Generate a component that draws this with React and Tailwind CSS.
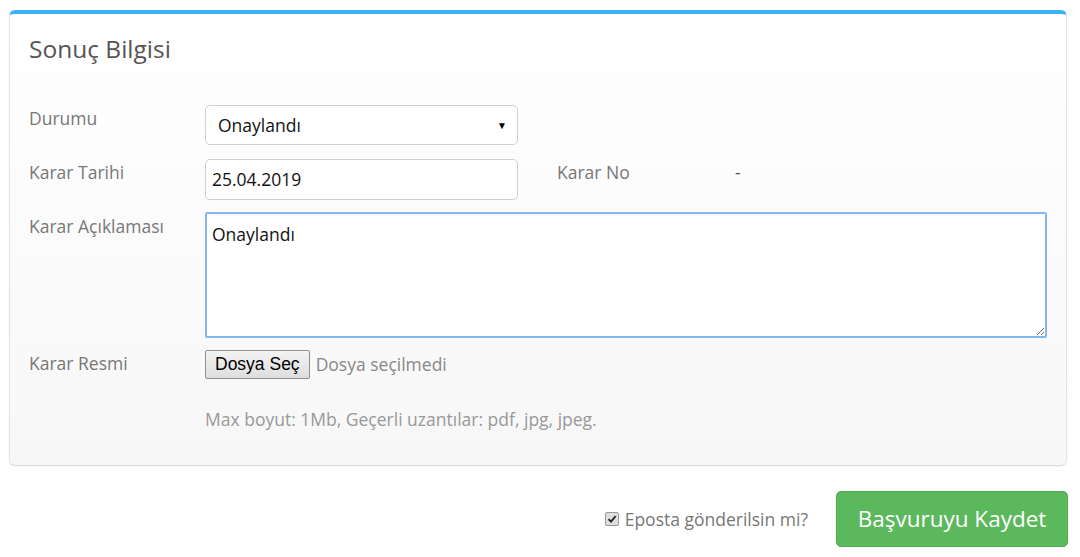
import React from "react";

const font = { fontFamily: '"Open Sans", "Noto Sans", sans-serif' };

export default function App() {
  return (
    <div className="w-[1080px] h-[557px] bg-white overflow-hidden" style={font}>
      <div className="ml-[9px] mt-[10px] w-[1058px] rounded-md border-t-4 border-t-[#39b3f5] border-x border-b border-x-[#e3e3e3] border-b-[#dcdcdc] bg-gradient-to-b from-white to-[#f7f7f7] shadow-[0_1px_2px_rgba(0,0,0,0.05)] px-[19px] pt-[20px] pb-[34px]">
        <h2 className="text-[24.5px] leading-[30px] text-[#555]">Sonuç Bilgisi</h2>

        <div className="mt-[41px] flex">
          <div className="w-[176px] shrink-0 text-[17.5px] leading-6 text-[#777] mt-px">Durumu</div>
          <div className="w-[313px] h-[40px] rounded-[5px] border border-[#cfcfcf] bg-white flex items-center pl-[12px] pr-[10px] justify-between">
            <span className="text-[17.5px] text-[#111]">Onaylandı</span>
            <span className="text-[10px] text-black">▼</span>
          </div>
        </div>

        <div className="mt-[14px] flex">
          <div className="w-[176px] shrink-0 text-[17.5px] leading-6 text-[#777] mt-px">Karar Tarihi</div>
          <div className="w-[313px] h-[41px] rounded-[5px] border border-[#cfcfcf] bg-white flex items-center pl-[6px]">
            <span className="text-[17.5px] text-[#111]">25.04.2019</span>
          </div>
          <div className="ml-[39px] w-[178px] text-[17.5px] leading-6 text-[#777] mt-px">Karar No</div>
          <div className="text-[17.5px] leading-6 text-[#555] mt-px">-</div>
        </div>

        <div className="mt-[12px] flex">
          <div className="w-[176px] shrink-0 text-[17.5px] leading-6 text-[#777] mt-[2px]">Karar Açıklaması</div>
          <textarea
            readOnly
            defaultValue="Onaylandı"
            className="w-[843px] h-[126px] rounded-[2px] border-2 border-[#86b5f2] bg-white px-[5px] py-[8px] text-[17.5px] leading-6 text-[#111] outline-none"
            style={font}
          />
        </div>

        <div className="mt-[12px] flex">
          <div className="w-[176px] shrink-0 text-[17.5px] leading-6 text-[#777] mt-px">Karar Resmi</div>
          <div>
            <div className="flex items-center">
              <span
                className="h-[29px] px-[9px] flex items-center rounded-[2px] border border-[#8f8f8f] bg-gradient-to-b from-[#f3f3f3] to-[#dedede] text-[17.5px] text-black"
                style={{ fontFamily: '"Liberation Sans", Arial, sans-serif' }}
              >
                Dosya Seç
              </span>
              <span className="ml-[6px] text-[17.5px] text-[#888]">Dosya seçilmedi</span>
            </div>
            <div className="mt-[28px] text-[17.5px] leading-6 text-[#999]">
              Max boyut: 1Mb, Geçerli uzantılar: pdf, jpg, jpeg.
            </div>
          </div>
        </div>
      </div>

      <div className="mt-[25px] mr-[12px] flex justify-end items-center">
        <span className="w-[14px] h-[14px] rounded-[2px] border border-[#9a9a9a] bg-[#dedede] flex items-center justify-center">
          <svg width="10" height="10" viewBox="0 0 10 10">
            <path d="M1.5 5.2 L4 7.6 L8.6 2.2" stroke="#222" strokeWidth="1.8" fill="none" />
          </svg>
        </span>
        <span className="ml-[6px] text-[17.5px] text-[#777]">Eposta gönderilsin mi?</span>
        <button className="ml-[28px] w-[232px] h-[56px] rounded-[5px] bg-[#5cb85c] border border-[#4cae4c] text-white text-[22.5px]" style={font}>
          Başvuruyu Kaydet
        </button>
      </div>
    </div>
  );
}
